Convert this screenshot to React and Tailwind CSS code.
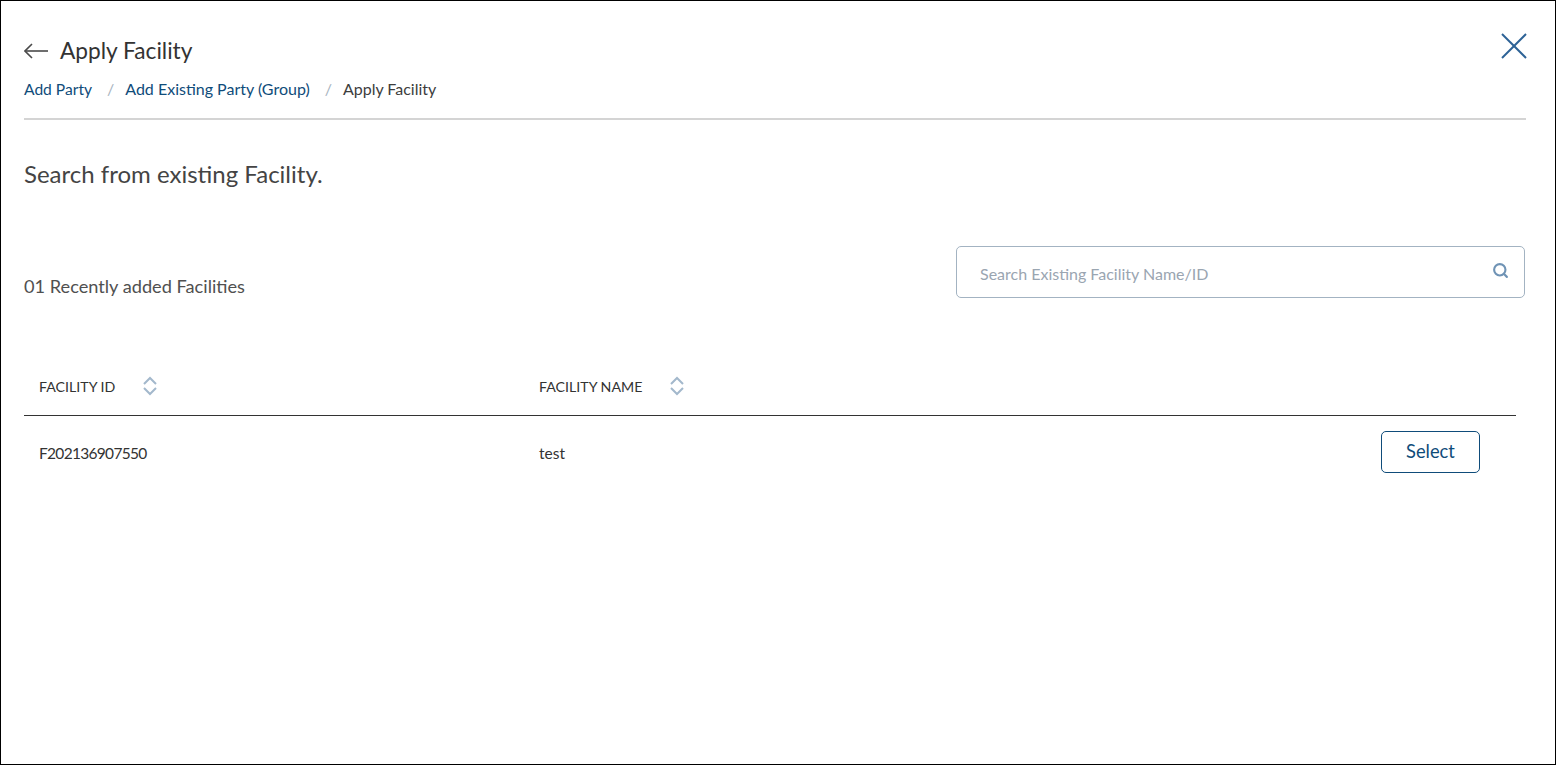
import React from 'react';
import { Search } from 'lucide-react';

function SortIcon() {
  return (
    <svg width="16" height="20" viewBox="0 0 16 20" fill="none" stroke="#a3b8cc" strokeWidth="2">
      <path d="M2 8 L8 2 L14 8" />
      <path d="M2 12 L8 18 L14 12" />
    </svg>
  );
}

function App() {
  return (
    <div className="w-[1556px] h-[765px] border border-black bg-white overflow-hidden font-['Lato','Liberation_Sans',sans-serif]">
      <div className="pl-[23px] pr-[29px] pt-[33px]">
        {/* Header */}
        <div className="flex justify-between border-b-2 border-[#d4d4d4] h-[86px]">
          <div>
            <div className="flex items-center gap-[11px] h-[34px]">
              <svg width="25" height="16" viewBox="0 0 25 16" fill="none" stroke="#4a4a4a" strokeWidth="1.6">
                <path d="M24 8 H1" />
                <path d="M8 1 L1 8 L8 15" />
              </svg>
              <h1 className="text-[22.7px] text-[#333333]">Apply Facility</h1>
            </div>
            <div className="flex items-baseline text-[16px] mt-[9px] h-[24px]">
              <span className="text-[#0f4c7a] text-[15.6px]">Add Party</span>
              <span className="text-[#a8b4c0] ml-[15px] mr-[11px]">/</span>
              <span className="text-[#0f4c7a]">Add Existing Party (Group)</span>
              <span className="text-[#a8b4c0] ml-[15px] mr-[11px]">/</span>
              <span className="text-[#3d3d3d]">Apply Facility</span>
            </div>
          </div>
          <svg className="-mt-[1px] mr-[-1px]" width="26" height="26" viewBox="0 0 26 26" fill="none" stroke="#2d6296" strokeWidth="2">
            <path d="M1 1 L25 25" />
            <path d="M25 1 L1 25" />
          </svg>
        </div>

        <h2 className="text-[24px] text-[#444444] mt-[38px] leading-[32px]">Search from existing Facility.</h2>

        {/* Count and search */}
        <div className="flex justify-between items-start mt-[56px]">
          <div className="text-[18.2px] text-[#505050] mt-[27px] leading-[26px]">01 Recently added Facilities</div>
          <div className="w-[569px] h-[52px] mr-[1px] border border-[#a3b3c2] rounded-[5px] flex items-center justify-between pl-[23px] pr-[15px]">
            <span className="text-[16px] text-[#9aa5b1] pt-[3px]">Search Existing Facility Name/ID</span>
            <Search size={17} color="#6f93b5" strokeWidth={3} className="-mt-[3px]" />
          </div>
        </div>

        {/* Table */}
        <div className="mt-[54px] mr-[10px]">
          <div className="flex items-center h-[63px] border-b border-[#333333] text-[14.2px] text-[#333333]">
            <div className="w-[515px] pl-[15px] flex items-center gap-[27px] pt-[5px]">
              <span>FACILITY ID</span>
              <SortIcon />
            </div>
            <div className="flex items-center gap-[27px] pt-[5px]">
              <span>FACILITY NAME</span>
              <SortIcon />
            </div>
          </div>
          <div className="flex items-center h-[74px] text-[15.5px] text-[#333333]">
            <div className="w-[515px] pl-[15px] pt-[2px] tracking-[-0.7px]">F202136907550</div>
            <div className="flex-1 pt-[2px]">test</div>
            <button className="w-[99px] h-[42px] mr-[36px] mb-[2px] border border-[#0f4c7a] rounded-[5px] text-[18.3px] text-[#0f4c7a]">Select</button>
          </div>
        </div>
      </div>
    </div>
  );
}

export default App;
